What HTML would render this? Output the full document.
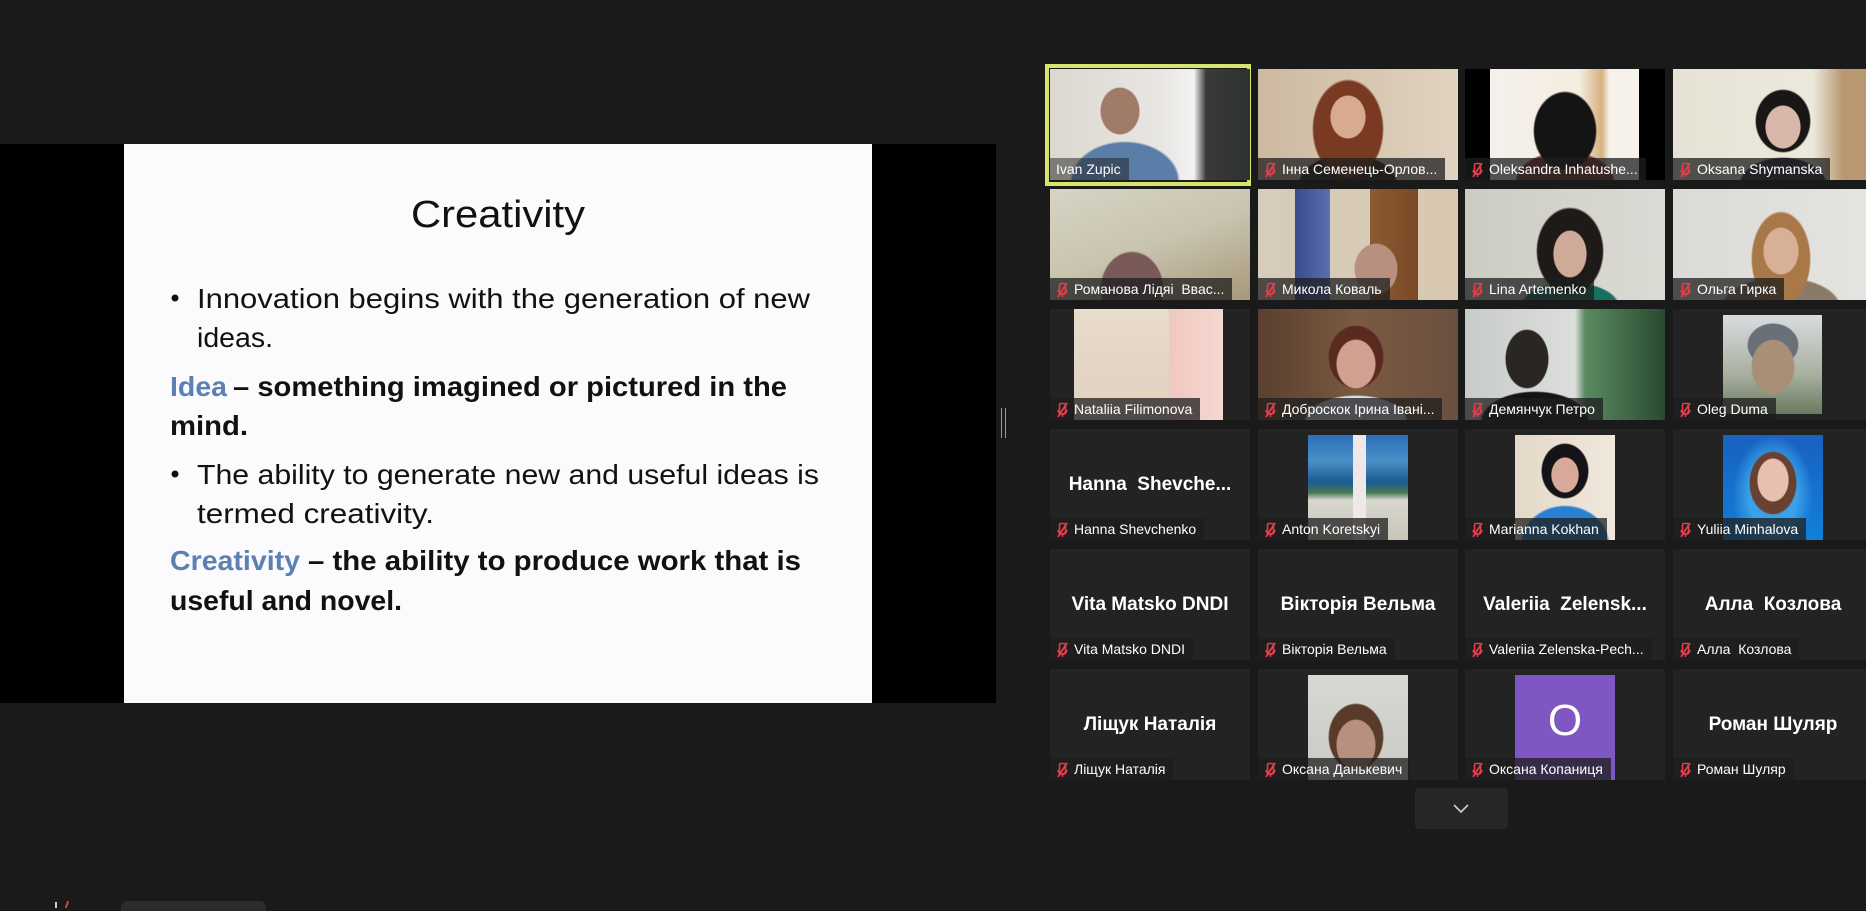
<!DOCTYPE html>
<html><head><meta charset="utf-8">
<style>
*{margin:0;padding:0;box-sizing:border-box}
body{width:1866px;height:908px;background:#1a1a1a;overflow:hidden;position:relative;font-family:"Liberation Sans",sans-serif}
.abs{position:absolute}
.tile{position:absolute;width:200px;height:111px;background:#232323;overflow:hidden}
.img{position:absolute;top:0;height:111px;overflow:hidden}
.lab{position:absolute;left:0;bottom:0;height:22px;background:rgba(30,30,30,0.75);color:#fff;font-size:14px;line-height:22px;padding:0 8px 0 24px;white-space:nowrap}
.lab svg{position:absolute;left:7px;top:4px}
.big{position:absolute;left:0;width:200px;top:45px;text-align:center;color:#fff;font-weight:bold;font-size:19px;white-space:nowrap}
</style></head><body>

<!-- slide area -->
<div class="abs" style="left:0;top:144px;width:996px;height:559px;background:#000"></div>
<svg class="abs" style="left:124px;top:144px" width="748" height="559" viewBox="124 144 748 559">
<rect x="124" y="144" width="748" height="559" fill="#fbfbfd"/>
<g font-family="Liberation Sans, sans-serif" fill="#111">
<text x="411" y="227" font-size="38" textLength="174" lengthAdjust="spacingAndGlyphs">Creativity</text>
<circle cx="175" cy="298" r="3.5"/>
<text x="197" y="308" font-size="28" textLength="613" lengthAdjust="spacingAndGlyphs">Innovation begins with the generation of new</text>
<text x="197" y="347" font-size="28" textLength="76" lengthAdjust="spacingAndGlyphs">ideas.</text>
<text x="170" y="396" font-size="28" font-weight="bold" textLength="57" lengthAdjust="spacingAndGlyphs" fill="#5a80b4">Idea</text>
<text x="233" y="396" font-size="28" font-weight="bold" textLength="554" lengthAdjust="spacingAndGlyphs">– something imagined or pictured in the</text>
<text x="170" y="435" font-size="28" font-weight="bold" textLength="78" lengthAdjust="spacingAndGlyphs">mind.</text>
<circle cx="175" cy="474" r="3.5"/>
<text x="197" y="484" font-size="28" textLength="622" lengthAdjust="spacingAndGlyphs">The ability to generate new and useful ideas is</text>
<text x="197" y="523" font-size="28" textLength="237" lengthAdjust="spacingAndGlyphs">termed creativity.</text>
<text x="170" y="570" font-size="28" font-weight="bold" textLength="130" lengthAdjust="spacingAndGlyphs" fill="#5a80b4">Creativity</text>
<text x="308" y="570" font-size="28" font-weight="bold" textLength="493" lengthAdjust="spacingAndGlyphs">– the ability to produce work that is</text>
<text x="170" y="610" font-size="28" font-weight="bold" textLength="232" lengthAdjust="spacingAndGlyphs">useful and novel.</text>
</g></svg>

<!-- divider handle -->
<div class="abs" style="left:1001px;top:408px;width:1px;height:30px;background:#9a9a9a"></div>
<div class="abs" style="left:1005px;top:408px;width:1px;height:30px;background:#9a9a9a"></div>

<!-- speaker border -->
<div class="abs" style="left:1045px;top:64px;width:206px;height:122px;border:4px solid #d8e56c"></div>

<svg width="0" height="0" style="position:absolute"><defs>
<g id="mic"><path d="M4 1.5 h3 a1.5 1.5 0 0 1 1.5 1.5 v6 a3 3 0 0 1 -6 0 v-6 a1.5 1.5 0 0 1 1.5 -1.5z" fill="none" stroke="#e0404a" stroke-width="1.6"/><path d="M1 8 a4.5 4.5 0 0 0 9 0 M5.5 12.5 v2.5" fill="none" stroke="#e0404a" stroke-width="1.4"/><path d="M1 15 L10 1" stroke="#e0404a" stroke-width="1.8"/></g>
</defs></svg>

<!-- Row 1 -->
<div class="tile" style="left:1050px;top:69px">
 <div class="img" style="left:0;width:200px;background:radial-gradient(ellipse 20px 24px at 70px 42px,#a07c68 95%,transparent 100%),radial-gradient(ellipse 55px 40px at 75px 112px,#5a7ea8 95%,transparent 100%),linear-gradient(90deg,#dcd8d0 0,#e8e6e2 55%,#f2f2f2 72%,#3a3a38 78%,#2e3230 100%)"></div>
 <div class="lab" style="padding-left:6px;background:rgba(30,30,30,0.5)">Ivan Zupic</div></div>
<div class="tile" style="left:1258px;top:69px">
 <div class="img" style="left:0;width:200px;background:radial-gradient(ellipse 18px 22px at 90px 48px,#d8aa90 95%,transparent 100%),radial-gradient(ellipse 36px 50px at 90px 60px,#7a3a22 95%,transparent 100%),radial-gradient(ellipse 50px 30px at 90px 115px,#302826 95%,transparent 100%),linear-gradient(90deg,#cdb9a0,#e0d3c0)"></div>
 <div class="lab"><svg width="12" height="16"><use href="#mic"/></svg>Інна Семенець-Орлов...</div></div>
<div class="tile" style="left:1465px;top:69px;background:#000">
 <div class="img" style="left:25px;width:149px;background:radial-gradient(ellipse 32px 40px at 75px 62px,#141414 95%,transparent 100%),radial-gradient(ellipse 50px 30px at 75px 112px,#8a3a38 95%,transparent 100%),linear-gradient(90deg,#f4f0ec,#f4ede0 60%,#d8b080 75%,#f6f2ea 80%)"></div>
 <div class="lab"><svg width="12" height="16"><use href="#mic"/></svg>Oleksandra Inhatushe...</div></div>
<div class="tile" style="left:1673px;top:69px">
 <div class="img" style="left:0;width:200px;background:radial-gradient(ellipse 18px 22px at 110px 58px,#d8b8a8 95%,transparent 100%),radial-gradient(ellipse 28px 32px at 110px 52px,#1a1616 95%,transparent 100%),radial-gradient(ellipse 45px 30px at 110px 118px,#303440 95%,transparent 100%),linear-gradient(90deg,#e6e2d4,#ece8dc 70%,#b89870 85%)"></div>
 <div class="lab"><svg width="12" height="16"><use href="#mic"/></svg>Oksana Shymanska</div></div>

<!-- Row 2 -->
<div class="tile" style="left:1050px;top:189px">
 <div class="img" style="left:0;width:200px;background:radial-gradient(ellipse 32px 38px at 82px 100px,#7a5a58 95%,transparent 100%),linear-gradient(160deg,#d8d4c4,#c8c4b0 50%,#a89878)"></div>
 <div class="lab"><svg width="12" height="16"><use href="#mic"/></svg>Романова Лідяі &nbsp;Ввас...</div></div>
<div class="tile" style="left:1258px;top:189px">
 <div class="img" style="left:0;width:200px;background:radial-gradient(ellipse 22px 26px at 118px 80px,#b89080 95%,transparent 100%),linear-gradient(90deg,transparent 37px,#3a4a90 37px,#5a70b0 72px,transparent 72px),linear-gradient(90deg,transparent 112px,#8a5a30 112px,#7a4a28 160px,transparent 160px),linear-gradient(90deg,#d6ccbc,#d8c8b0)"></div>
 <div class="lab"><svg width="12" height="16"><use href="#mic"/></svg>Микола Коваль</div></div>
<div class="tile" style="left:1465px;top:189px">
 <div class="img" style="left:0;width:200px;background:radial-gradient(ellipse 17px 24px at 105px 65px,#d0aa98 95%,transparent 100%),radial-gradient(ellipse 34px 44px at 105px 62px,#1e1a18 95%,transparent 100%),radial-gradient(ellipse 50px 25px at 105px 118px,#187060 95%,transparent 100%),linear-gradient(90deg,#ccccc4,#dcdad4)"></div>
 <div class="lab"><svg width="12" height="16"><use href="#mic"/></svg>Lina Artemenko</div></div>
<div class="tile" style="left:1673px;top:189px">
 <div class="img" style="left:0;width:200px;background:radial-gradient(ellipse 18px 24px at 108px 62px,#d8b098 95%,transparent 100%),radial-gradient(ellipse 30px 48px at 108px 70px,#a87848 95%,transparent 100%),radial-gradient(ellipse 60px 30px at 108px 118px,#8a7a68 95%,transparent 100%),linear-gradient(90deg,#dcdad6,#e6e4e0)"></div>
 <div class="lab"><svg width="12" height="16"><use href="#mic"/></svg>Ольга Гирка</div></div>

<!-- Row 3 -->
<div class="tile" style="left:1050px;top:309px">
 <div class="img" style="left:24px;width:149px;background:linear-gradient(90deg,transparent 95px,#f0c8c0 95px,#f4d8d0 149px),linear-gradient(180deg,#e8dccc,#e0d0c0)"></div>
 <div class="lab"><svg width="12" height="16"><use href="#mic"/></svg>Nataliia Filimonova</div></div>
<div class="tile" style="left:1258px;top:309px">
 <div class="img" style="left:0;width:200px;background:radial-gradient(ellipse 20px 25px at 98px 55px,#d0a090 95%,transparent 100%),radial-gradient(ellipse 28px 32px at 98px 48px,#5a2a20 95%,transparent 100%),radial-gradient(ellipse 52px 26px at 98px 112px,#d8dce8 95%,transparent 100%),linear-gradient(90deg,#5a4030,#7a5a40 50%,#6a5040)"></div>
 <div class="lab"><svg width="12" height="16"><use href="#mic"/></svg>Доброскок Ірина Івані...</div></div>
<div class="tile" style="left:1465px;top:309px">
 <div class="img" style="left:0;width:200px;background:radial-gradient(ellipse 22px 30px at 62px 50px,#2a2624 95%,transparent 100%),radial-gradient(ellipse 55px 30px at 70px 112px,#141414 95%,transparent 100%),linear-gradient(90deg,#c8ccc8,#dcdedc 55%,#5a8a60 60%,#2a4a30 100%)"></div>
 <div class="lab"><svg width="12" height="16"><use href="#mic"/></svg>Демянчук Петро</div></div>
<div class="tile" style="left:1673px;top:309px">
 <div class="img" style="left:50px;top:6px;width:99px;height:99px;background:radial-gradient(ellipse 22px 28px at 50px 52px,#a89078 95%,transparent 100%),radial-gradient(ellipse 26px 22px at 50px 30px,#6a7078 95%,transparent 100%),linear-gradient(180deg,#d8dce0,#a8b0a0 60%,#6a7a60)"></div>
 <div class="lab"><svg width="12" height="16"><use href="#mic"/></svg>Oleg Duma</div></div>

<!-- Row 4 -->
<div class="tile" style="left:1050px;top:429px">
 <div class="big">Hanna &nbsp;Shevche...</div>
 <div class="lab"><svg width="12" height="16"><use href="#mic"/></svg>Hanna Shevchenko</div></div>
<div class="tile" style="left:1258px;top:429px">
 <div class="img" style="left:50px;top:6px;width:100px;height:105px;background:linear-gradient(90deg,transparent 45px,#f0e8e8 45px,#f0e8e8 58px,transparent 58px),linear-gradient(180deg,#2a70b8 0,#4a90c8 25%,#1a5a90 45%,#4a7a50 55%,#d8d8d0 62%,#c8c4b8 100%)"></div>
 <div class="lab"><svg width="12" height="16"><use href="#mic"/></svg>Anton Koretskyi</div></div>
<div class="tile" style="left:1465px;top:429px">
 <div class="img" style="left:50px;top:6px;width:100px;height:105px;background:radial-gradient(ellipse 14px 18px at 50px 40px,#d8a898 95%,transparent 100%),radial-gradient(ellipse 24px 28px at 50px 36px,#141418 95%,transparent 100%),radial-gradient(ellipse 45px 40px at 50px 110px,#2a80d0 95%,transparent 100%),linear-gradient(90deg,#e4d8c8,#f0e8dc)"></div>
 <div class="lab"><svg width="12" height="16"><use href="#mic"/></svg>Marianna Kokhan</div></div>
<div class="tile" style="left:1673px;top:429px">
 <div class="img" style="left:50px;top:6px;width:100px;height:105px;background:radial-gradient(ellipse 16px 22px at 50px 45px,#e8c0b0 95%,transparent 100%),radial-gradient(ellipse 24px 32px at 50px 48px,#6a4030 95%,transparent 100%),radial-gradient(ellipse 40px 60px at 50px 60px,#3aa0e8 60%,transparent 100%),linear-gradient(180deg,#1a60c0,#1080d8)"></div>
 <div class="lab"><svg width="12" height="16"><use href="#mic"/></svg>Yuliia Minhalova</div></div>

<!-- Row 5 -->
<div class="tile" style="left:1050px;top:549px"><div class="big">Vita Matsko DNDI</div>
 <div class="lab"><svg width="12" height="16"><use href="#mic"/></svg>Vita Matsko DNDI</div></div>
<div class="tile" style="left:1258px;top:549px"><div class="big">Вікторія Вельма</div>
 <div class="lab"><svg width="12" height="16"><use href="#mic"/></svg>Вікторія Вельма</div></div>
<div class="tile" style="left:1465px;top:549px"><div class="big">Valeriia &nbsp;Zelensk...</div>
 <div class="lab"><svg width="12" height="16"><use href="#mic"/></svg>Valeriia Zelenska-Pech...</div></div>
<div class="tile" style="left:1673px;top:549px"><div class="big">Алла &nbsp;Козлова</div>
 <div class="lab"><svg width="12" height="16"><use href="#mic"/></svg>Алла &nbsp;Козлова</div></div>

<!-- Row 6 -->
<div class="tile" style="left:1050px;top:669px"><div class="big">Ліщук Наталія</div>
 <div class="lab"><svg width="12" height="16"><use href="#mic"/></svg>Ліщук Наталія</div></div>
<div class="tile" style="left:1258px;top:669px">
 <div class="img" style="left:50px;top:6px;width:100px;height:105px;background:radial-gradient(ellipse 20px 26px at 48px 70px,#b89080 95%,transparent 100%),radial-gradient(ellipse 28px 34px at 48px 62px,#5a3a28 95%,transparent 100%),linear-gradient(180deg,#d8d8d4,#c8cac4)"></div>
 <div class="lab"><svg width="12" height="16"><use href="#mic"/></svg>Оксана Данькевич</div></div>
<div class="tile" style="left:1465px;top:669px">
 <div class="img" style="left:50px;top:6px;width:100px;height:105px;background:#7e57c2;color:#fff;font-size:44px;text-align:center;line-height:92px">O</div>
 <div class="lab"><svg width="12" height="16"><use href="#mic"/></svg>Оксана Копаниця</div></div>
<div class="tile" style="left:1673px;top:669px"><div class="big">Роман Шуляр</div>
 <div class="lab"><svg width="12" height="16"><use href="#mic"/></svg>Роман Шуляр</div></div>

<!-- chevron button -->
<div class="abs" style="left:1415px;top:788px;width:93px;height:41px;background:#262626;border-radius:4px"></div>
<svg class="abs" style="left:1452px;top:803px" width="18" height="11"><path d="M2 2 L9 9 L16 2" fill="none" stroke="#d0d0d0" stroke-width="1.6"/></svg>

<!-- bottom bar hints -->
<div class="abs" style="left:121px;top:901px;width:145px;height:10px;background:#2c2c2c;border-radius:6px 6px 0 0"></div>
<div class="abs" style="left:55px;top:902px;width:2px;height:6px;background:#ccc"></div>
<div class="abs" style="left:66px;top:901px;width:2px;height:7px;background:#e0404a;transform:rotate(20deg)"></div>
</body></html>
